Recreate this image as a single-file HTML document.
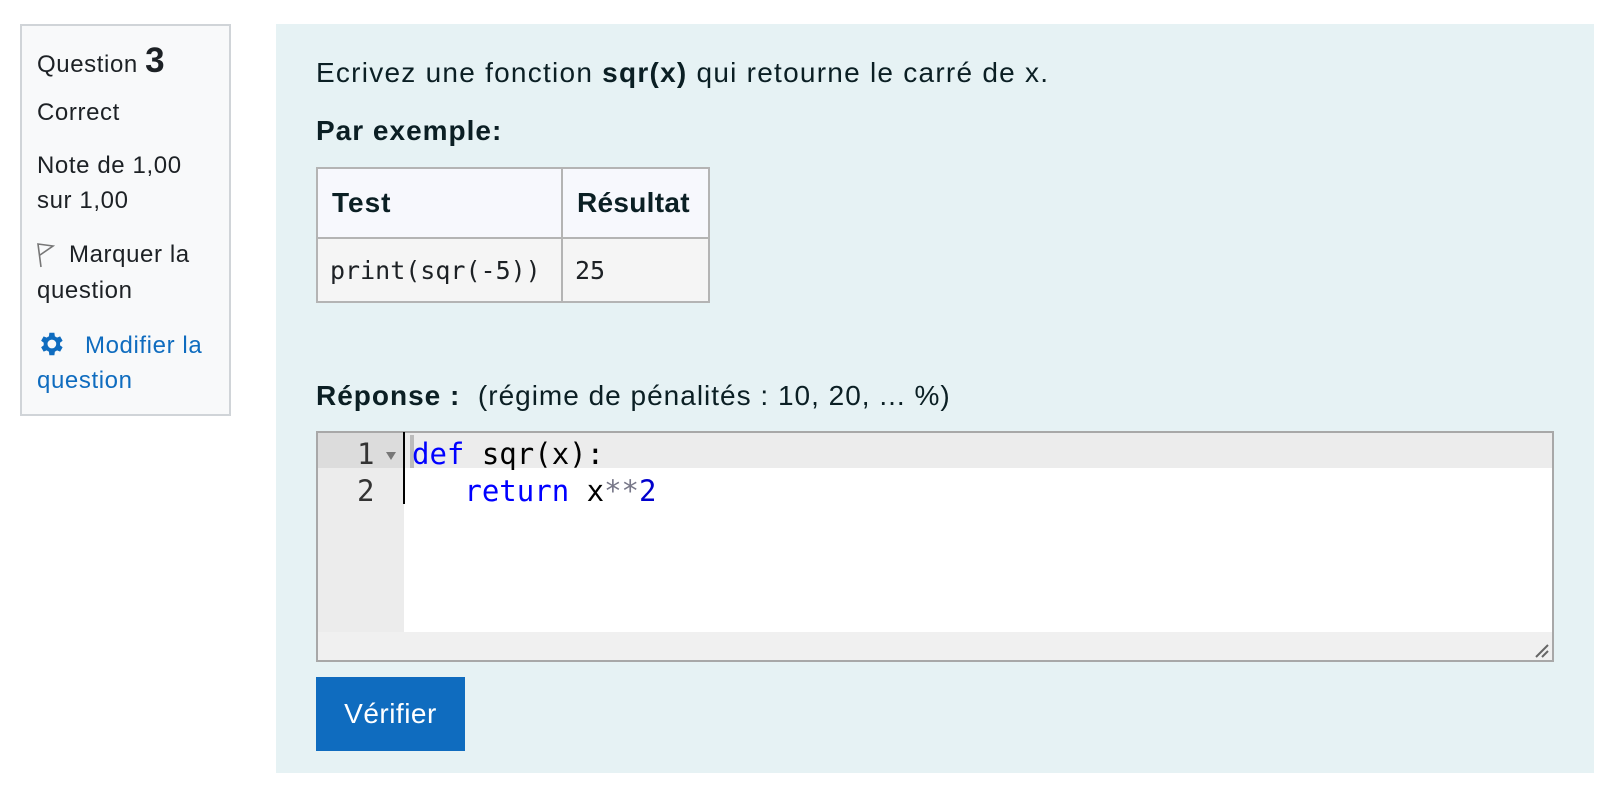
<!DOCTYPE html>
<html><head><meta charset="utf-8"><style>
*{margin:0;padding:0;box-sizing:border-box}
body{width:1624px;height:788px;background:#fff;font-family:"Liberation Sans",Arial,sans-serif;color:#1d2125;position:relative;overflow:hidden}
.abs{position:absolute;white-space:nowrap}
.info{position:absolute;left:20px;top:24px;width:211px;height:392px;background:#f8f9fa;border:2px solid #d0d4d8}
.s{font-size:24px;line-height:1;letter-spacing:0.6px}
.main{position:absolute;left:276px;top:24px;width:1318px;height:749px;background:#e6f2f4}
.m{font-size:28px;line-height:1;color:#0b1f24;letter-spacing:1px}
table{position:absolute;left:316px;top:167px;border-collapse:collapse}
td{border:2px solid #b4b4b4;padding:0 14px}
.mono{font-family:"DejaVu Sans Mono","Liberation Mono",monospace}
</style></head><body>
<div class="info"></div>
<div class="abs s" style="left:37px;top:43px">Question <b style="font-size:35px">3</b></div>
<div class="abs s" style="left:37px;top:101px">Correct</div>
<div class="abs s" style="left:37px;top:154px">Note de 1,00</div>
<div class="abs s" style="left:37px;top:189px">sur 1,00</div>
<svg class="abs" style="left:37px;top:242px" width="18" height="26" viewBox="0 0 18 26"><path d="M4 25 L1 2 L16 4 L3 13" fill="none" stroke="#777" stroke-width="1.6"/></svg>
<div class="abs s" style="left:69px;top:243px">Marquer la</div>
<div class="abs s" style="left:37px;top:279px">question</div>
<svg class="abs" style="left:37px;top:329px" width="30" height="30" viewBox="0 0 24 24"><path fill="#0f6cbf" d="M19.4 13a7.5 7.5 0 0 0 0-2l2.1-1.6-2-3.5-2.5 1a7.6 7.6 0 0 0-1.7-1L14.9 3h-4l-.4 2.9a7.6 7.6 0 0 0-1.7 1l-2.5-1-2 3.5L6.4 11a7.5 7.5 0 0 0 0 2l-2.1 1.6 2 3.5 2.5-1c.5.4 1.1.8 1.7 1l.4 2.9h4l.4-2.9c.6-.2 1.2-.6 1.7-1l2.5 1 2-3.5zM12.9 15.5a3.5 3.5 0 1 1 0-7 3.5 3.5 0 0 1 0 7z" transform="translate(-1 0)"/></svg>
<div class="abs s" style="left:85px;top:334px;color:#0f6cbf">Modifier la</div>
<div class="abs s" style="left:37px;top:369px;color:#0f6cbf">question</div>

<div class="main"></div>
<div class="abs m" style="left:316px;top:59px;letter-spacing:1.25px">Ecrivez une fonction <b>sqr(x)</b> qui retourne le carré de x.</div>
<div class="abs m" style="left:316px;top:117px"><b>Par exemple:</b></div>
<table>
<tr style="height:70px;background:#f7f8fd"><td style="width:245px"><b class="m">Test</b></td><td style="width:147px"><b class="m" style="letter-spacing:0.3px">Résultat</b></td></tr>
<tr style="height:64px;background:#f5f5f5"><td class="mono" style="font-size:25px;padding-left:12px">print(sqr(-5))</td><td class="mono" style="font-size:25px;padding-left:12px">25</td></tr>
</table>
<div class="abs m" style="left:316px;top:382px"><b>Réponse :</b>&nbsp; (régime de pénalités : 10, 20, ... %)</div>

<div class="abs" style="left:316px;top:431px;width:1238px;height:231px;background:#f0f0f0;border:2px solid #a8a8a8"></div>
<div class="abs" style="left:318px;top:433px;width:86px;height:199px;background:#ececec"></div>
<div class="abs" style="left:318px;top:433px;width:86px;height:35px;background:#dcdcdc"></div>
<div class="abs" style="left:404px;top:433px;width:1148px;height:199px;background:#fff"></div>
<div class="abs" style="left:404px;top:433px;width:1148px;height:35px;background:#ececec"></div>
<div class="abs" style="left:403px;top:432px;width:2px;height:72px;background:#000"></div>
<div class="abs mono" style="left:357px;top:436px;font-size:29px;line-height:37px;color:#333">1<br>2</div>
<div class="abs" style="left:386px;top:452px;width:0;height:0;border-left:5px solid transparent;border-right:5px solid transparent;border-top:8px solid #777"></div>
<div class="abs" style="left:410px;top:435px;width:4px;height:33px;background:#bbb"></div>
<div class="abs mono" style="left:412px;top:436px;font-size:29px;line-height:37px;color:#000"><span style="color:#0000ff">def</span> sqr(x):<br>&nbsp;&nbsp;&nbsp;<span style="color:#0000ff">return</span> x<span style="color:#778">**</span><span style="color:#0000cd">2</span></div>
<svg class="abs" style="left:1534px;top:643px" width="16" height="16"><path d="M2 14L14 2M8 14L14 8" stroke="#666" stroke-width="2"/></svg>

<div class="abs" style="left:316px;top:677px;width:149px;height:74px;background:#0f6cbf;color:#fff;font-size:28px;line-height:74px;text-align:center;letter-spacing:0.5px">Vérifier</div>
</body></html>
